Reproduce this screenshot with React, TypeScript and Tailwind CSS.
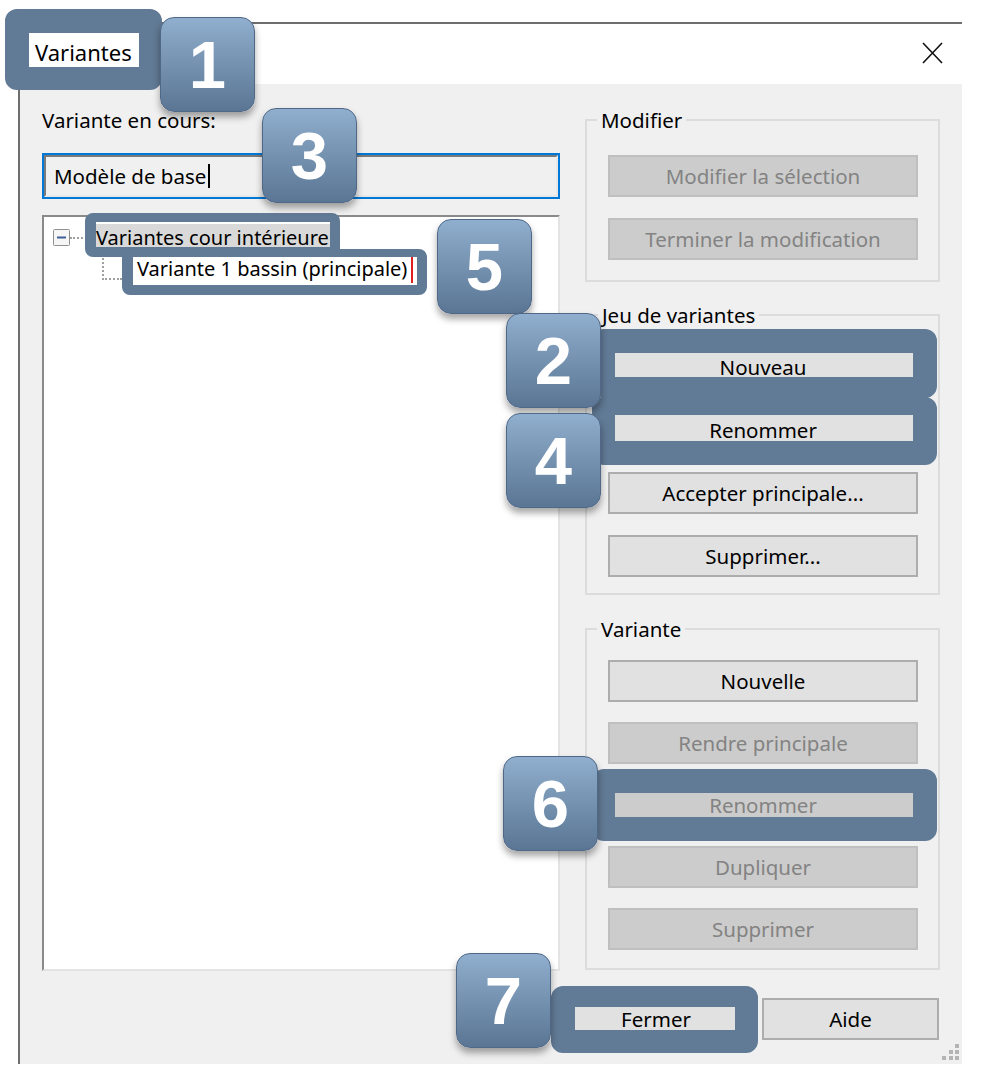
import React from "react";

const Btn = ({ label, disabled }: { label: string; disabled?: boolean }) => (
  <button
    type="button"
    className={`h-[42px] w-full border-2 text-[20.5px] leading-none ${
      disabled
        ? "bg-[#cccccc] border-[#bfbfbf] text-[#838383]"
        : "bg-[#e1e1e1] border-[#adadad] text-black"
    }`}
  >
    {label}
  </button>
);

const Badge = ({ n, pos }: { n: string; pos: string }) => (
  <div
    className={`absolute ${pos} w-[95px] h-[95px] rounded-[14px] border border-[#4f6887] bg-linear-to-b from-[#90aecd] to-[#5a7694] shadow-[0_5px_7px_rgba(0,0,0,0.35)] flex items-center justify-center text-white font-bold text-[67px] leading-none font-['Liberation_Sans',Arial,sans-serif]`}
  >
    {n}
  </div>
);

const Tree = () => (
  <div className="mt-[16px] h-[756px] bg-white border-t-2 border-l-2 border-[#8a8a8a] border-r-2 border-b-2 border-r-[#e3e3e3] border-b-[#e3e3e3] pt-[5px]">
    {/* parent row */}
    <div className="flex items-center h-[31px] pl-[9px]">
      <svg width="17" height="17" viewBox="0 0 17 17">
        <rect x="0.5" y="0.5" width="16" height="16" fill="#f6f6f6" stroke="#8f8f8f" rx="1" />
        <line x1="4" y1="8.5" x2="13" y2="8.5" stroke="#3d5e98" strokeWidth="2" />
      </svg>
      <div className="w-[25px] border-t-2 border-dotted border-[#a0a0a0]" />
      <span className="bg-[#d9d9d9] px-[1px] leading-[28px] text-[20px] text-black">
        Variantes cour intérieure
      </span>
    </div>
    {/* child row */}
    <div className="flex items-center h-[31px] pl-[58px]">
      <div className="w-[20px] h-[22px] -mt-[22px] border-l-2 border-b-2 border-dotted border-[#a0a0a0] translate-y-[11px]" />
      <span className="ml-[15px] bg-white pr-[4px] border-r-2 border-[#e02020] leading-[28px] text-[20px] text-black">
        Variante 1 bassin (principale)
      </span>
    </div>
  </div>
);

export default function App() {
  return (
    <div className="relative w-[990px] h-[1086px] bg-white overflow-hidden font-['Noto_Sans',sans-serif] text-black">
      <div className="ml-[18px] mt-[22px] w-[944px] h-[1042px] border-l-2 border-t-2 border-[#6e6e6e] flex flex-col">
        {/* title bar */}
        <div className="h-[60px] bg-white flex items-center justify-between pl-[15px] pr-[19px]">
          <span className="text-[22px] pb-[4px]">Variantes</span>
          <svg width="21" height="22" viewBox="0 0 21 22" className="-mt-[3px]">
            <path d="M1 1 L20 21 M20 1 L1 21" stroke="#111" strokeWidth="1.6" />
          </svg>
        </div>

        {/* body */}
        <div className="relative flex-1 bg-[#f0f0f0] pt-[23px] flex flex-col">
          <div className="flex pl-[22px] pr-[21px] gap-[25px]">
            {/* left column */}
            <div className="w-[518px] flex flex-col">
              <div className="text-[20.5px] leading-[26px]">Variante en cours:</div>
              <div className="mt-[20px] h-[46px] border-2 border-[#0078d7]">
                <div className="h-full border-t-2 border-l-2 border-[#7a7a7a] border-b-2 border-r-2 border-b-[#e8e8e8] border-r-[#e8e8e8] bg-[#f0f0f0] flex items-center pl-[8px]">
                  <span className="text-[20.5px] leading-none">Modèle de base</span>
                  <span className="ml-[2px] w-[2px] h-[24px] bg-black" />
                </div>
              </div>
              <Tree />
            </div>

            {/* right column */}
            <div className="w-[355px] flex flex-col">
              <fieldset className="border-2 border-[#dcdcdc] pl-[21px] pr-[20px] pt-[22px] pb-[20px]">
                <legend className="-ml-[11px] px-[4px] text-[20.5px] leading-[26px]">Modifier</legend>
                <div className="flex flex-col gap-[21px]">
                  <Btn label="Modifier la sélection" disabled />
                  <Btn label="Terminer la modification" disabled />
                </div>
              </fieldset>

              <fieldset className="mt-[20px] border-2 border-[#dcdcdc] pl-[21px] pr-[20px] pt-[18px] pb-[16px]">
                <legend className="-ml-[10px] px-[4px] text-[20.5px] leading-[26px]">Jeu de variantes</legend>
                <div className="flex flex-col gap-[21px]">
                  <Btn label="Nouveau" />
                  <Btn label="Renommer" />
                  <Btn label="Accepter principale..." />
                  <Btn label="Supprimer..." />
                </div>
              </fieldset>

              <fieldset className="mt-[21px] border-2 border-[#dcdcdc] pl-[21px] pr-[20px] pt-[18px] pb-[18px]">
                <legend className="-ml-[11px] px-[4px] text-[20.5px] leading-[26px]">Variante</legend>
                <div className="flex flex-col gap-[20px]">
                  <Btn label="Nouvelle" />
                  <Btn label="Rendre principale" disabled />
                  <Btn label="Renommer" disabled />
                  <Btn label="Dupliquer" disabled />
                  <Btn label="Supprimer" disabled />
                </div>
              </fieldset>
            </div>
          </div>

          {/* footer */}
          <div className="mt-[27px] flex justify-end gap-[17px] pr-[23px]">
            <div className="w-[178px]">
              <Btn label="Fermer" />
            </div>
            <div className="w-[177px]">
              <Btn label="Aide" />
            </div>
          </div>

          {/* resize grip */}
          <svg width="17" height="17" viewBox="0 0 17 17" className="absolute right-[3px] bottom-[3px]">
            <g fill="#b4b4b4">
              <rect x="13" y="0" width="4" height="4" />
              <rect x="7" y="6" width="4" height="4" />
              <rect x="13" y="6" width="4" height="4" />
              <rect x="0" y="12" width="4" height="4" />
              <rect x="7" y="12" width="4" height="4" />
              <rect x="13" y="12" width="4" height="4" />
            </g>
          </svg>
        </div>
      </div>

      {/* annotation frames */}
      <div className="absolute left-[5px] top-[9px] w-[157px] h-[81px] border-[#617a95] border-l-[24px] border-t-[24px] border-r-[23px] border-b-[23px] rounded-[12px]" />
      <div className="absolute left-[85px] top-[213px] w-[255px] h-[44px] border-[#617a95] border-l-[11px] border-t-[9px] border-r-[10px] border-b-[10px] rounded-[8px]" />
      <div className="absolute left-[122px] top-[249px] w-[305px] h-[46px] border-[#617a95] border-l-[11px] border-t-[8px] border-r-[10px] border-b-[10px] rounded-[8px]" />
      <div className="absolute left-[592px] top-[329px] w-[345px] h-[69px] border-[#617a95] border-l-[23px] border-t-[24px] border-r-[24px] border-b-[21px] rounded-[12px]" />
      <div className="absolute left-[592px] top-[397px] w-[345px] h-[68px] border-[#617a95] border-l-[23px] border-t-[18px] border-r-[24px] border-b-[24px] rounded-[12px]" />
      <div className="absolute left-[592px] top-[769px] w-[345px] h-[72px] border-[#617a95] border-l-[23px] border-t-[24px] border-r-[24px] border-b-[24px] rounded-[12px]" />
      <div className="absolute left-[551px] top-[986px] w-[207px] h-[67px] border-[#617a95] border-l-[24px] border-t-[21px] border-r-[23px] border-b-[23px] rounded-[12px]" />

      {/* numbered badges */}
      <Badge n="1" pos="left-[160px] top-[17px]" />
      <Badge n="3" pos="left-[262px] top-[108px]" />
      <Badge n="5" pos="left-[437px] top-[219px]" />
      <Badge n="2" pos="left-[506px] top-[313px]" />
      <Badge n="4" pos="left-[506px] top-[413px]" />
      <Badge n="6" pos="left-[503px] top-[756px]" />
      <Badge n="7" pos="left-[456px] top-[953px]" />
    </div>
  );
}
